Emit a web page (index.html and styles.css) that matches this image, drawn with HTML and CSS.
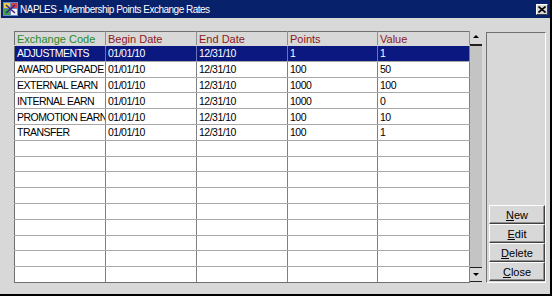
FILE: index.html
```html
<!doctype html>
<html>

<head>
   <meta charset="utf-8">
   <title>NAPLES - Membership Points Exchange Rates</title>
   <link rel="stylesheet" href="styles.css">
</head>

<body>
   <div class="window">
      <div class="titleBar">
         <svg class="appIcon" width="15" height="14" viewBox="0 0 15 14">
            <rect x="0" y="0" width="15" height="14" fill="#6a86c8"/>
            <rect x="1" y="1" width="6" height="5" fill="#e8d040"/>
            <rect x="8" y="1" width="6" height="5" fill="#d04040"/>
            <rect x="1" y="7" width="6" height="6" fill="#40a040"/>
            <rect x="8" y="7" width="6" height="6" fill="#f0f0f0"/>
            <path d="M3 3 L12 11 M12 3 L3 11" stroke="#402080" stroke-width="1.5"/>
         </svg>
         <span class="title">NAPLES - Membership Points Exchange Rates</span>
         <div class="closeBtn">
            <svg width="8" height="7" viewBox="0 0 8 7">
               <path d="M0.5 0.5 L7.5 6.5 M7.5 0.5 L0.5 6.5" stroke="#000" stroke-width="1.6"/>
            </svg>
         </div>
      </div>

      <div class="content">
         <div class="gridArea">
            <table class="grid">
               <colgroup>
                  <col style="width:91px">
                  <col style="width:91px">
                  <col style="width:91px">
                  <col style="width:90px">
                  <col style="width:92px">
               </colgroup>
               <thead>
                  <tr>
                     <th class="key">Exchange Code</th>
                     <th>Begin Date</th>
                     <th>End Date</th>
                     <th>Points</th>
                     <th>Value</th>
                  </tr>
               </thead>
               <tbody>
                  <tr class="selected"><td>ADJUSTMENTS</td><td>01/01/10</td><td>12/31/10</td><td>1</td><td>1</td></tr>
                  <tr><td>AWARD UPGRADE SPEND</td><td>01/01/10</td><td>12/31/10</td><td>100</td><td>50</td></tr>
                  <tr><td>EXTERNAL EARN</td><td>01/01/10</td><td>12/31/10</td><td>1000</td><td>100</td></tr>
                  <tr><td>INTERNAL EARN</td><td>01/01/10</td><td>12/31/10</td><td>1000</td><td>0</td></tr>
                  <tr><td>PROMOTION EARN</td><td>01/01/10</td><td>12/31/10</td><td>100</td><td>10</td></tr>
                  <tr><td>TRANSFER</td><td>01/01/10</td><td>12/31/10</td><td>100</td><td>1</td></tr>
                  <tr><td></td><td></td><td></td><td></td><td></td></tr>
                  <tr><td></td><td></td><td></td><td></td><td></td></tr>
                  <tr><td></td><td></td><td></td><td></td><td></td></tr>
                  <tr><td></td><td></td><td></td><td></td><td></td></tr>
                  <tr><td></td><td></td><td></td><td></td><td></td></tr>
                  <tr><td></td><td></td><td></td><td></td><td></td></tr>
                  <tr><td></td><td></td><td></td><td></td><td></td></tr>
                  <tr><td></td><td></td><td></td><td></td><td></td></tr>
                  <tr><td></td><td></td><td></td><td></td><td></td></tr>
               </tbody>
            </table>
            <div class="scrollbar">
               <div class="arrow up"></div>
               <div class="track"></div>
               <div class="arrow down"></div>
            </div>
         </div>

         <div class="sidePanel">
            <button class="btn"><u>N</u>ew</button>
            <button class="btn"><u>E</u>dit</button>
            <button class="btn"><u>D</u>elete</button>
            <button class="btn"><u>C</u>lose</button>
         </div>
      </div>
   </div>
</body>

</html>
```

FILE: styles.css
```css
html,
body {
   padding: 0;
   margin: 0;
   background: #d8d8d8;
   font-family: "Liberation Sans", Arial, sans-serif;
   font-size: 11px;
}

.window {
   width: 552px;
   height: 296px;
   box-sizing: border-box;
   background: #d8d8d8;
   border-right: 2px solid #000;
   border-bottom: 2px solid #000;
   display: flex;
   flex-direction: column;
}

.titleBar {
   height: 18px;
   background: #08216b;
   color: #FFF;
   display: flex;
   align-items: center;
   padding: 0 2px 0 2px;
   border-left: 1px solid #c8c8c8;
}

.appIcon {
   margin-right: 2px;
}

.title {
   flex: 1;
   font-size: 10px;
   letter-spacing: -0.5px;
}

.closeBtn {
   width: 12px;
   height: 11px;
   box-sizing: border-box;
   background: #d8d8d8;
   border: 1px solid;
   border-color: #FFF #404040 #404040 #FFF;
   display: flex;
   align-items: center;
   justify-content: center;
}

.content {
   flex: 1;
   display: flex;
   gap: 4px;
   padding: 13px 5px 0 14px;
}

.gridArea {
   display: flex;
   height: 251px;
}

.grid {
   table-layout: fixed;
   width: 455px;
   border-collapse: collapse;
   background: #FFF;
   border-left: 1px solid #707070;
   border-top: 1px solid #707070;
}

.grid th {
   height: 13px;
   background: #d8d8d8;
   color: #8b1a1a;
   font-weight: normal;
   text-align: left;
   padding: 0 2px;
   border-right: 1px solid #909090;
   border-bottom: 1px solid #d8d8d8;
   white-space: nowrap;
   overflow: hidden;
}

.grid th.key {
   color: #2a8a2a;
}

.grid td {
   height: 14.8px;
   padding: 0 2px;
   color: #000;
   font-size: 10.5px;
   letter-spacing: -0.5px;
   border-right: 1px solid #808080;
   border-bottom: 1px solid #a8a8a8;
   white-space: nowrap;
   overflow: hidden;
   line-height: 12px;
}

.grid tr:last-child td {
   border-bottom: 1px solid #707070;
}

.grid tr.selected td {
   background: #0a1880;
   color: #FFF;
   border-right-color: #6a74b8;
}

.scrollbar {
   width: 12px;
   display: flex;
   flex-direction: column;
   background: #c4c4c4;
}

.scrollbar .track {
   flex: 1;
}

.scrollbar .arrow {
   height: 13px;
   background: #d8d8d8;
   position: relative;
}

.scrollbar .arrow.up {
   border-bottom: 2px solid #202020;
}

.scrollbar .arrow.down {
   border-top: 1px solid #202020;
   border-bottom: 1px solid #202020;
}

.scrollbar .arrow::after {
   content: "";
   position: absolute;
   left: 3px;
   top: 4px;
   border-left: 3px solid transparent;
   border-right: 3px solid transparent;
}

.scrollbar .arrow.up::after {
   border-bottom: 3px solid #000;
}

.scrollbar .arrow.down::after {
   top: 5px;
   border-top: 3px solid #000;
}

.sidePanel {
   width: 60px;
   height: 251px;
   margin-top: 1px;
   box-sizing: border-box;
   border: 1px solid;
   border-color: #707070 #FFF #FFF #707070;
   display: flex;
   flex-direction: column;
   justify-content: flex-end;
   padding: 0 0 1px 2px;
}

.btn {
   height: 19px;
   width: 56px;
   background: #d8d8d8;
   border: 1px solid;
   border-color: #FFF #404040 #404040 #FFF;
   box-shadow: inset -1px -1px 0 #909090;
   font-family: "Liberation Sans", Arial, sans-serif;
   font-size: 11px;
   color: #000;
   padding: 0;
   text-align: center;
}
```
